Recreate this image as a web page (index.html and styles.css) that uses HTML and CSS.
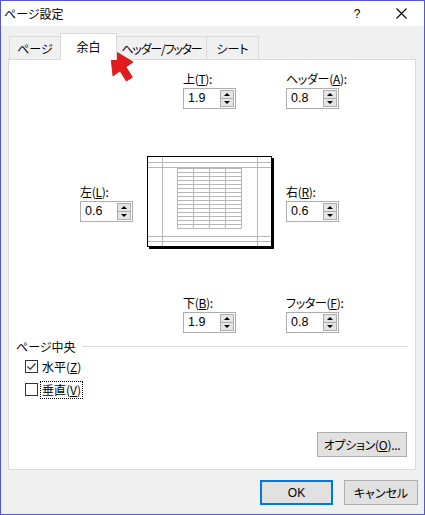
FILE: index.html
```html
<!DOCTYPE html>
<html lang="ja">
<head>
<meta charset="utf-8">
<title>ページ設定</title>
<link rel="stylesheet" href="styles.css">
</head>
<body>
<div class="window">
  <div class="titlebar">
    <span class="title">ページ設定</span>
    <span class="help">?</span>
    <span class="close">
      <svg width="11" height="11" viewBox="0 0 11 11"><path d="M0.5 0.5 L10.5 10.5 M10.5 0.5 L0.5 10.5" stroke="#000" stroke-width="1.1" fill="none"/></svg>
    </span>
  </div>
  <div class="body">
    <div class="tabs">
      <div class="tab t1">ページ</div>
      <div class="tab t2 selected">余白</div>
      <div class="tab t3">ヘッダー/フッター</div>
      <div class="tab t4">シート</div>
    </div>
    <div class="panel">
      <div class="row row-top">
        <div class="field wide">
          <div class="label">上(<u>T</u>):</div>
          <div class="spin"><span class="val">1.9</span><span class="btns"><span class="b up"></span><span class="b down"></span></span></div>
        </div>
        <div class="field">
          <div class="label">ヘッダー(<u>A</u>):</div>
          <div class="spin"><span class="val">0.8</span><span class="btns"><span class="b up"></span><span class="b down"></span></span></div>
        </div>
      </div>
      <div class="row row-mid">
        <div class="field side">
          <div class="label">左(<u>L</u>):</div>
          <div class="spin"><span class="val">0.6</span><span class="btns"><span class="b up"></span><span class="b down"></span></span></div>
        </div>
        <svg class="preview" width="127" height="93" viewBox="0 0 127 93">
          <rect x="2" y="2" width="125" height="91" fill="#000"/>
          <rect x="0.5" y="0.5" width="124" height="90" fill="#fff" stroke="#000"/>
          <g stroke="#b8b8b8" stroke-width="1" fill="none">
            <path d="M1 6.5 H124 M1 11.5 H124 M1 80.5 H124 M1 85.5 H124"/>
            <path d="M15.5 1 V90 M110.5 1 V90"/>
            <rect x="30.5" y="12.5" width="64" height="60"/>
            <path d="M46.5 12.5 V72.5 M62.5 12.5 V72.5 M78.5 12.5 V72.5"/>
            <path d="M30.5 16.5 H94.5 M30.5 20.5 H94.5 M30.5 24.5 H94.5 M30.5 28.5 H94.5 M30.5 32.5 H94.5 M30.5 36.5 H94.5 M30.5 40.5 H94.5 M30.5 44.5 H94.5 M30.5 48.5 H94.5 M30.5 52.5 H94.5 M30.5 56.5 H94.5 M30.5 60.5 H94.5 M30.5 64.5 H94.5 M30.5 68.5 H94.5"/>
          </g>
        </svg>
        <div class="field">
          <div class="label">右(<u>R</u>):</div>
          <div class="spin"><span class="val">0.6</span><span class="btns"><span class="b up"></span><span class="b down"></span></span></div>
        </div>
      </div>
      <div class="row row-bot">
        <div class="field wide">
          <div class="label">下(<u>B</u>):</div>
          <div class="spin"><span class="val">1.9</span><span class="btns"><span class="b up"></span><span class="b down"></span></span></div>
        </div>
        <div class="field">
          <div class="label">フッター(<u>F</u>):</div>
          <div class="spin"><span class="val">0.8</span><span class="btns"><span class="b up"></span><span class="b down"></span></span></div>
        </div>
      </div>
      <div class="section">ページ中央</div>
      <div class="check">
        <span class="box">
          <svg width="11" height="11" viewBox="0 0 11 11"><path d="M1.5 5.5 L4.2 8.2 L9.5 2.5" stroke="#444" stroke-width="1.4" fill="none"/></svg>
        </span>
        <span class="ctext">水平(<u>Z</u>)</span>
      </div>
      <div class="check">
        <span class="box"></span>
        <span class="ctext focus">垂直(<u>V</u>)</span>
      </div>
      <div class="opt-row">
        <button class="btn opt">オプション(<u>O</u>)...</button>
      </div>
    </div>
    <div class="footer">
      <button class="btn ok">OK</button>
      <button class="btn cancel">キャンセル</button>
    </div>
  </div>
  <svg class="arrow" width="30" height="40" viewBox="0 0 30 40">
    <path d="M1 1 L24 15 L17 20.1 L23.4 30.3 L17.4 34.1 L11 23.9 L4 29 Z" fill="#e21b1b" stroke="#c81212" stroke-width="0.8" stroke-linejoin="round"/>
  </svg>
</div>
</body>
</html>
```

FILE: styles.css
```css
* { box-sizing: border-box; }
html, body { margin: 0; padding: 0; background: #fff; }
body {
  font-family: "Noto Sans CJK JP", "Noto Sans", sans-serif;
  font-size: 12px;
  color: #000;
  font-feature-settings: "palt";
}
u { text-decoration: underline; text-underline-offset: 1px; }

.window {
  position: relative;
  width: 425px;
  height: 515px;
  border: 1px solid #5656d4;
  background: #f0f0f0;
  display: flex;
  flex-direction: column;
}

.titlebar {
  height: 25px;
  background: #fff;
  display: flex;
  align-items: center;
  padding-left: 3px;
  flex: none;
}
.title { flex: 1; line-height: 16px; }
.help { width: 10px; margin-right: 34px; text-align: center; font-family: "Liberation Sans", sans-serif; font-size: 12px; }
.close { width: 11px; height: 11px; margin-right: 17px; display: flex; }

.body { flex: 1; display: flex; flex-direction: column; padding-top: 7px; }

.tabs {
  display: flex;
  align-items: flex-end;
  height: 26px;
  margin-left: 8px;
}
.tab {
  height: 23px;
  border: 1px solid #d9d9d9;
  border-bottom: none;
  background: #f0f0f0;
  display: flex;
  align-items: center;
  justify-content: center;
  line-height: 16px;
  padding-top: 1px;
  white-space: nowrap;
}
.t1 { width: 52px; }
.t2 { width: 57px; margin-left: -1px; }
.t3 { width: 91px; margin-left: -1px; letter-spacing: -1.2px; }
.t4 { width: 53px; margin-left: -1px; }
.tab.selected {
  height: 27px;
  margin-bottom: -1px;
  background: #fff;
  position: relative;
  z-index: 1;
  padding-top: 0;
  padding-bottom: 1px;
}

.panel {
  margin-left: 7px;
  margin-right: 8px;
  height: 411px;
  background: #fff;
  border: 1px solid #d9d9d9;
  padding-top: 10px;
  flex: none;
}

.row { display: flex; }
.row-top, .row-bot { margin-left: 174px; }
.row-mid { margin-left: 71px; margin-top: 47px; align-items: center; }
.row-bot { margin-top: 45px; }

.field { display: flex; flex-direction: column; }
.field.wide { width: 103px; }
.field.side { width: 67px; }
.preview { display: block; margin-right: 12px; }

.label { height: 18px; line-height: 18px; white-space: nowrap; letter-spacing: -0.3px; }

.spin {
  width: 53px;
  height: 21px;
  border: 1px solid #acacac;
  background: #fff;
  display: flex;
  align-items: center;
}
.val { flex: 1; padding-left: 4px; font-family: "Liberation Sans", sans-serif; font-size: 12.5px; line-height: 19px; }
.btns { display: flex; flex-direction: column; margin-right: 1px; }
.b {
  width: 14px;
  height: 9px;
  background: #e5e5e5;
  border: 1px solid #acacac;
  display: flex;
  align-items: center;
  justify-content: center;
}
.b.down { margin-top: -1px; }
.b.up::after {
  content: "";
  border-left: 3px solid transparent;
  border-right: 3px solid transparent;
  border-bottom: 3px solid #000;
}
.b.down::after {
  content: "";
  border-left: 3px solid transparent;
  border-right: 3px solid transparent;
  border-top: 3px solid #000;
}

.section {
  margin-top: 5px;
  margin-left: 7px;
  margin-right: 7px;
  height: 17px;
  line-height: 17px;
  display: flex;
  align-items: center;
}
.section::after {
  content: "";
  flex: 1;
  border-top: 1px solid #dcdcdc;
  margin-left: 6px;
}

.check {
  height: 23px;
  margin-left: 16px;
  display: flex;
  align-items: center;
}
.box {
  width: 13px;
  height: 13px;
  border: 1px solid #333;
  background: #fff;
  display: flex;
  align-items: center;
  justify-content: center;
}
.ctext {
  margin-left: 2px;
  padding: 0 1px;
  height: 18px;
  line-height: 17px;
  border: 1px dotted transparent;
  display: flex;
  align-items: center;
}
.ctext.focus { border-color: #000; }

.opt-row { display: flex; justify-content: flex-end; margin-top: 31px; margin-right: 8px; }

.btn {
  font-family: "Noto Sans CJK JP", "Noto Sans", sans-serif;
  font-feature-settings: "palt";
  font-size: 12px;
  color: #000;
  height: 25px;
  background: #e1e1e1;
  border: 1px solid #adadad;
  padding: 0;
  line-height: 16px;
}
.opt { width: 90px; letter-spacing: -0.3px; }
.footer {
  display: flex;
  justify-content: flex-end;
  gap: 11px;
  margin-top: 10px;
  padding-right: 6px;
}
.ok { width: 73px; border: 2px solid #0078d7; font-family: "Liberation Sans", sans-serif; }
.cancel { width: 74px; }

.arrow {
  position: absolute;
  left: 108px;
  top: 46px;
}
```
